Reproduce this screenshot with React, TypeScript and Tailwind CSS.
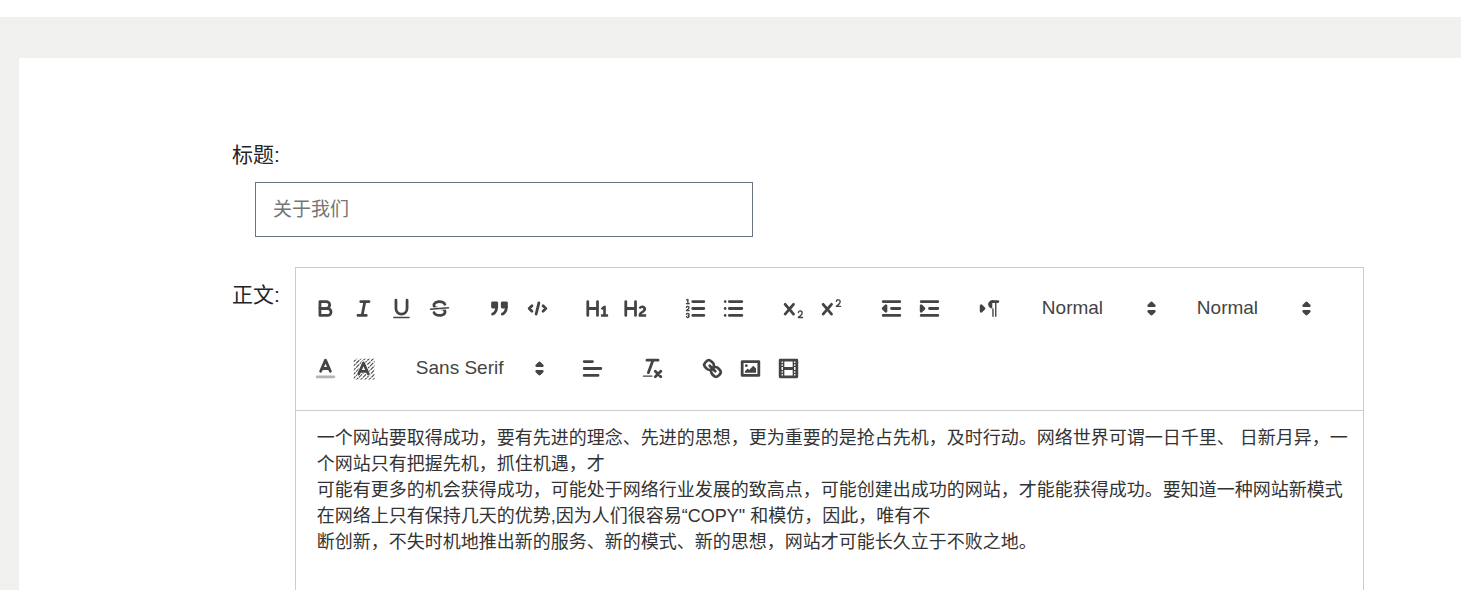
import type { ReactNode } from "react";

type Tool = { label: string; icon: ReactNode };

const xPath =
  "M9.65,5.241a1,1,0,0,0-1.409.108L6,7.964,3.759,5.349A1,1,0,0,0,2.192,6.59178Q2.21541,6.6213,2.241,6.649L4.684,9.5,2.241,12.35A1,1,0,0,0,3.71,13.70722q0.02557-.02768.049-0.05722L6,11.036,8.241,13.65a1,1,0,1,0,1.567-1.24277Q9.78459,12.3777,9.759,12.35L7.316,9.5,9.759,6.651A1,1,0,0,0,9.65,5.241Z";

const solid = { fill: "currentColor", stroke: "none" };

const inlineTools: Tool[] = [
  {
    label: "Bold",
    icon: (
      <>
        <path d="M5,4H9.5A2.5,2.5,0,0,1,12,6.5v0A2.5,2.5,0,0,1,9.5,9H5V4Z" />
        <path d="M5,9h5.5A2.5,2.5,0,0,1,13,11.5v0A2.5,2.5,0,0,1,10.5,14H5V9Z" />
      </>
    ),
  },
  { label: "Italic", icon: <path d="M7,4H13M5,14H11M8,14L10,4" /> },
  {
    label: "Underline",
    icon: (
      <>
        <path d="M5,3V9a4.012,4.012,0,0,0,4,4H9a4.012,4.012,0,0,0,4-4V3" />
        <rect {...solid} x="3" y="15" width="12" height="1" rx="0.5" />
      </>
    ),
  },
  {
    label: "Strike",
    icon: (
      <>
        <path strokeWidth="1" d="M15.5,8.5L2.5,9.5" />
        <path
          {...solid}
          d="M9.007,8C6.542,7.791,6,7.519,6,6.5,6,5.792,7.283,5,9,5c1.571,0,2.765.679,2.969,1.309a1,1,0,0,0,1.9-.617C13.356,4.106,11.354,3,9,3,6.2,3,4,4.538,4,6.5a3.2,3.2,0,0,0,.5,1.843Z"
        />
        <path
          {...solid}
          d="M8.984,10C11.457,10.208,12,10.479,12,11.5c0,0.708-1.283,1.5-3,1.5-1.571,0-2.765-.679-2.969-1.309a1,1,0,1,0-1.9.617C4.644,13.894,6.646,15,9,15c2.8,0,5-1.538,5-3.5a3.2,3.2,0,0,0-.5-1.843Z"
        />
      </>
    ),
  },
];

const blockTools: Tool[] = [
  {
    label: "Blockquote",
    icon: (
      <g fill="currentColor">
        <rect x="4" y="5" width="3" height="3" />
        <rect x="11" y="5" width="3" height="3" />
        <path d="M7,8c0,4.031-3,5-3,5" />
        <path d="M14,8c0,4.031-3,5-3,5" />
      </g>
    ),
  },
  {
    label: "Code block",
    icon: <path d="M5,7L3,9L5,11M13,7L15,9L13,11M10,5L8,13" />,
  },
];

const headerTools: Tool[] = [
  {
    label: "Heading 1",
    icon: (
      <path
        {...solid}
        d="M10,4V14a1,1,0,0,1-2,0V10H3v4a1,1,0,0,1-2,0V4A1,1,0,0,1,3,4V8H8V4a1,1,0,0,1,2,0Zm6.06787,9.209H14.98975V7.59863a.54085.54085,0,0,0-.605-.60547h-.62744a1.01119,1.01119,0,0,0-.748.29688L11.645,8.56641a.5435.5435,0,0,0-.022.8584l.28613.30762a.53861.53861,0,0,0,.84717.0332l.09912-.08789a1.2137,1.2137,0,0,0,.2417-.35254h.02246s-.01123.30859-.01123.60547V13.209H12.041a.54085.54085,0,0,0-.605.60547v.43945a.54085.54085,0,0,0,.605.60547h4.02686a.54085.54085,0,0,0,.605-.60547v-.43945A.54085.54085,0,0,0,16.06787,13.209Z"
      />
    ),
  },
  {
    label: "Heading 2",
    icon: (
      <path
        {...solid}
        d="M16.73975,13.81445v.43945a.54085.54085,0,0,1-.605.60547H11.855a.58392.58392,0,0,1-.64893-.60547V14.0127c0-2.90527,3.39941-3.42187,3.39941-4.55469a.77675.77675,0,0,0-.84717-.78125,1.17684,1.17684,0,0,0-.83594.38477c-.2749.26367-.561.374-.85791.13184l-.4292-.34082c-.30811-.24219-.38525-.51758-.1543-.81445a2.97155,2.97155,0,0,1,2.45361-1.17676,2.45393,2.45393,0,0,1,2.68408,2.40918c0,2.45312-3.1792,2.92676-3.27832,3.93848h2.79443A.54085.54085,0,0,1,16.73975,13.81445ZM9,3A.99974.99974,0,0,0,8,4V8H3V4A1,1,0,0,0,1,4V14a1,1,0,0,0,2,0V10H8v4a1,1,0,0,0,2,0V4A.99974.99974,0,0,0,9,3Z"
      />
    ),
  },
];

const listTools: Tool[] = [
  {
    label: "Ordered list",
    icon: (
      <>
        <path d="M7,4H15M7,9H15M7,14H15" />
        <path
          {...solid}
          d="M3.5,6A0.5,0.5,0,0,1,3,5.5V3.085l-0.276.138A0.5,0.5,0,0,1,2.053,3c-0.124-.247-0.023-0.324.224-0.447l1-.5A0.5,0.5,0,0,1,4,2.5v3A0.5,0.5,0,0,1,3.5,6Z"
        />
        <g strokeWidth="1">
          <path d="M2.5,5.5H4.5" />
          <path d="M4.5,10.5h-2c0-.234,1.85-1.076,1.85-2.234A0.959,0.959,0,0,0,2.5,8.156" />
          <path d="M2.5,14.846a0.959,0.959,0,0,0,1.85-.109A0.7,0.7,0,0,0,3.75,14a0.688,0.688,0,0,0,.6-0.736,0.959,0.959,0,0,0-1.85-.109" />
        </g>
      </>
    ),
  },
  {
    label: "Bullet list",
    icon: <path d="M6,4H15M6,9H15M6,14H15M3,4H3M3,9H3M3,14H3" />,
  },
];

const scriptTools: Tool[] = [
  {
    label: "Subscript",
    icon: (
      <g {...solid}>
        <path d="M15.5,15H13.861a3.858,3.858,0,0,0,1.914-2.975,1.8,1.8,0,0,0-1.6-1.751A1.921,1.921,0,0,0,12.021,11.7a0.50013,0.50013,0,1,0,.957.291h0a0.914,0.914,0,0,1,1.053-.725,0.81,0.81,0,0,1,.744.762c0,1.076-1.16971,1.86982-1.93971,2.43082A1.45639,1.45639,0,0,0,12,15.5a0.5,0.5,0,0,0,.5.5h3A0.5,0.5,0,0,0,15.5,15Z" />
        <path d={xPath} />
      </g>
    ),
  },
  {
    label: "Superscript",
    icon: (
      <g {...solid}>
        <path d="M15.5,7H13.861a4.015,4.015,0,0,0,1.914-2.975,1.8,1.8,0,0,0-1.6-1.751A1.922,1.922,0,0,0,12.021,3.7a0.5,0.5,0,1,0,.957.291,0.917,0.917,0,0,1,1.053-.725,0.81,0.81,0,0,1,.744.762c0,1.077-1.164,1.925-1.934,2.486A1.423,1.423,0,0,0,12,7.5a0.5,0.5,0,0,0,.5.5h3A0.5,0.5,0,0,0,15.5,7Z" />
        <path d={xPath} />
      </g>
    ),
  },
];

const indentTools: Tool[] = [
  {
    label: "Outdent",
    icon: (
      <>
        <path d="M3,14H15M3,4H15M9,9H15" />
        <path fill="currentColor" d="M5,7V11L3,9Z" />
      </>
    ),
  },
  {
    label: "Indent",
    icon: (
      <>
        <path d="M3,14H15M3,4H15M9,9H15" />
        <path fill="currentColor" d="M3,7V11L5,9Z" />
      </>
    ),
  },
];

const directionTools: Tool[] = [
  {
    label: "Text direction",
    icon: (
      <>
        <path fill="currentColor" d="M3,11L5,9L3,7Z" />
        <path d="M15,4H11" />
        <path {...solid} d="M11,3a3,3,0,0,0,0,6h1V3H11ZM11,4h1v11h-1ZM13,4h1v11h-1Z" />
      </>
    ),
  },
];

const colorTools: Tool[] = [
  {
    label: "Text color",
    icon: (
      <>
        <path opacity="0.4" d="M3,15H15" />
        <path d="M5.5,11L9,3L12.5,11M11.63,9H6.38" />
      </>
    ),
  },
  {
    label: "Background color",
    icon: (
      <>
        <defs>
          <clipPath id="hatch-area">
            <rect x="2" y="2" width="15" height="15" />
          </clipPath>
        </defs>
        <path
          clipPath="url(#hatch-area)"
          strokeWidth="0.8"
          strokeDasharray="3.2 0.6"
          strokeLinecap="butt"
          d="M1,5L5,1M1,8L8,1M1,11L11,1M1,14L14,1M1,17L17,1M3,18L18,3M6,18L18,6M9,18L18,9M12,18L18,12M15,18L18,15"
        />
        <path className="stroke-white" strokeWidth="3" d="M5.5,13L9,5L12.5,13M11.63,11H6.38" />
        <path d="M5.5,13L9,5L12.5,13M11.63,11H6.38" />
      </>
    ),
  },
];

const alignTools: Tool[] = [{ label: "Align", icon: <path d="M3,9H15M3,14H13M3,4H9" /> }];

const cleanTools: Tool[] = [
  {
    label: "Clear formatting",
    icon: (
      <>
        <path d="M5,3H13M6,12L9.35,3M11,11L15,15M15,11L11,15" />
        <rect {...solid} x="2" y="14" width="7" height="1" rx="0.5" />
      </>
    ),
  },
];

const mediaTools: Tool[] = [
  {
    label: "Link",
    icon: (
      <>
        <path d="M7,7L11,11" />
        <path d="M8.9,4.577a3.476,3.476,0,0,1,.36,4.679A3.476,3.476,0,0,1,4.577,8.9C3.185,7.5,2.035,6.4,4.217,4.217S7.5,3.185,8.9,4.577Z" />
        <path d="M13.423,9.1a3.476,3.476,0,0,0-4.679-.36,3.476,3.476,0,0,0,.36,4.679c1.392,1.392,2.5,2.542,4.679.36S14.815,10.5,13.423,9.1Z" />
      </>
    ),
  },
  {
    label: "Image",
    icon: (
      <>
        <rect x="3" y="4" width="12" height="10" />
        <circle {...solid} cx="6" cy="7" r="1" />
        <path {...solid} d="M5,12V11L7,9L8,10L11,7L13,9V12Z" />
      </>
    ),
  },
  {
    label: "Video",
    icon: (
      <>
        <rect x="3" y="3" width="12" height="12" />
        <path
          {...solid}
          d="M5,3h1v12h-1ZM12,3h1v12h-1ZM5,8h8v2h-8ZM3,5h3v1h-3ZM3,7h3v1h-3ZM3,10h3v1h-3ZM3,12h3v1h-3ZM12,5h3v1h-3ZM12,7h3v1h-3ZM12,10h3v1h-3ZM12,12h3v1h-3Z"
        />
      </>
    ),
  },
];

const paragraphs = [
  "一个网站要取得成功，要有先进的理念、先进的思想，更为重要的是抢占先机，及时行动。网络世界可谓一日千里、 日新月异，一个网站只有把握先机，抓住机遇，才",
  "可能有更多的机会获得成功，可能处于网络行业发展的致高点，可能创建出成功的网站，才能能获得成功。要知道一种网站新模式在网络上只有保持几天的优势,因为人们很容易“COPY\" 和模仿，因此，唯有不",
  "断创新，不失时机地推出新的服务、新的模式、新的思想，网站才可能长久立于不败之地。",
];

function Icon({ children }: { children: ReactNode }) {
  return (
    <svg
      viewBox="0 0 18 18"
      className="size-[25px]"
      fill="none"
      stroke="currentColor"
      strokeWidth="2"
      strokeLinecap="round"
      strokeLinejoin="round"
      aria-hidden="true"
    >
      {children}
    </svg>
  );
}

function ToolGroup({ tools }: { tools: Tool[] }) {
  return (
    <div className="flex h-[60px] items-center">
      {tools.map((tool) => (
        <button
          key={tool.label}
          type="button"
          aria-label={tool.label}
          className="flex h-8 w-[38px] cursor-pointer items-center justify-center hover:text-[#0066cc]"
        >
          <Icon>{tool.icon}</Icon>
        </button>
      ))}
    </div>
  );
}

function Picker({ label, options, className }: { label: string; options: string[]; className: string }) {
  return (
    <div className={`relative flex h-[60px] items-center ${className}`}>
      <select
        aria-label={label}
        className="h-8 w-full cursor-pointer appearance-none bg-transparent pl-[11px] text-[19px] outline-none"
      >
        {options.map((option) => (
          <option key={option}>{option}</option>
        ))}
      </select>
      <span className="pointer-events-none absolute right-0">
        <Icon>
          <path fill="currentColor" d="M7,11L9,13L11,11ZM7,7L9,5L11,7Z" />
        </Icon>
      </span>
    </div>
  );
}

function Toolbar() {
  return (
    <div
      role="toolbar"
      className="flex flex-wrap gap-x-[22px] border border-[#cccccc] px-[11px] pt-[10px] pb-3 text-[#444444]"
    >
      <ToolGroup tools={inlineTools} />
      <ToolGroup tools={blockTools} />
      <ToolGroup tools={headerTools} />
      <ToolGroup tools={listTools} />
      <ToolGroup tools={scriptTools} />
      <ToolGroup tools={indentTools} />
      <ToolGroup tools={directionTools} />
      <Picker label="Size" options={["Normal", "Small", "Large", "Huge"]} className="w-[133px]" />
      <Picker label="Heading" options={["Normal", "Heading 1", "Heading 2"]} className="w-[133px]" />
      <ToolGroup tools={colorTools} />
      <Picker label="Font" options={["Sans Serif", "Serif", "Monospace"]} className="w-[147px]" />
      <ToolGroup tools={alignTools} />
      <ToolGroup tools={cleanTools} />
      <ToolGroup tools={mediaTools} />
    </div>
  );
}

export default function App() {
  return (
    <div className="flex h-screen flex-col overflow-hidden bg-white pt-[17px] font-['Liberation_Sans','Noto_Sans_CJK_SC',sans-serif]">
      <main className="flex flex-1 flex-col bg-[#f0f0ee] pt-[41px] pl-[19px]">
        <form className="flex flex-1 flex-col bg-white pt-[81px] pr-[97px] pl-[213px] text-[#212529]">
          <label htmlFor="title" className="text-[21px] leading-8">
            标题:
          </label>
          <input
            id="title"
            type="text"
            placeholder="关于我们"
            className="mt-[11px] ml-[23px] h-[55px] w-full max-w-[498px] border border-[#6c757d] px-[17px] text-[19px] outline-none placeholder:text-[#757575]"
          />
          <div className="mt-[30px] flex flex-1 items-stretch gap-[15px]">
            <label id="body-label" className="mt-3 shrink-0 text-[21px] leading-8">
              正文:
            </label>
            <div className="flex min-w-0 flex-1 flex-col">
              <Toolbar />
              <div
                contentEditable
                suppressContentEditableWarning
                role="textbox"
                aria-multiline="true"
                aria-labelledby="body-label"
                className="flex-1 border-x border-[#cccccc] pt-[14px] pr-3 pl-[21px] text-[18px] leading-[26px] text-[#333333] outline-none"
              >
                {paragraphs.map((paragraph) => (
                  <p key={paragraph}>{paragraph}</p>
                ))}
              </div>
            </div>
          </div>
        </form>
      </main>
    </div>
  );
}
